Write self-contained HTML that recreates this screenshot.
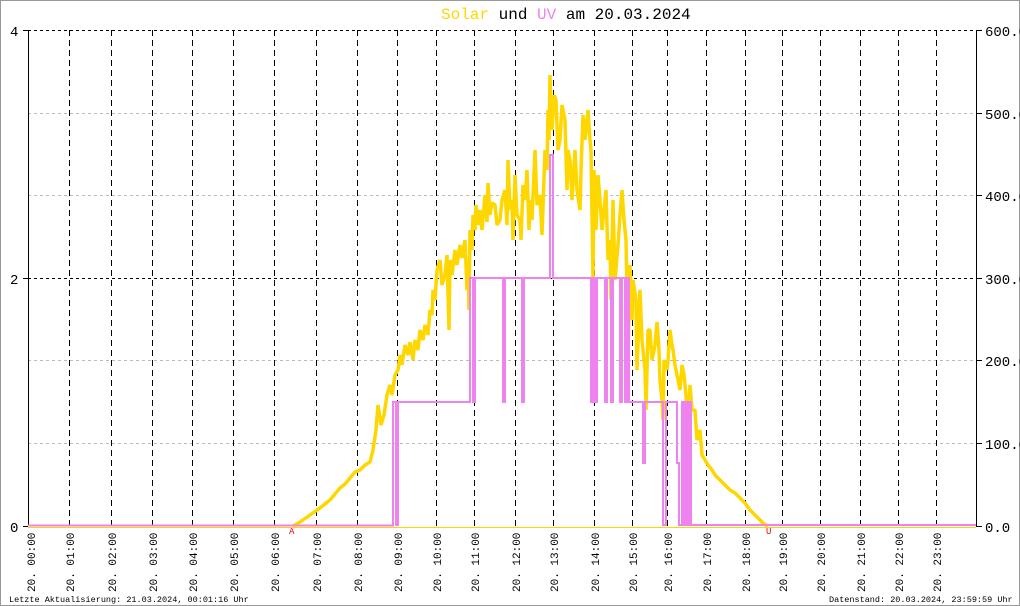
<!DOCTYPE html>
<html><head><meta charset="utf-8"><style>
html,body{margin:0;padding:0;background:#fff}
svg{display:block}
text{font-family:"Liberation Mono",monospace}
</style></head><body>
<svg width="1020" height="606" viewBox="0 0 1020 606" xmlns="http://www.w3.org/2000/svg">
<rect x="0.5" y="0.5" width="1019" height="605" fill="#fff" stroke="#999"/>
<text x="441" y="19" font-size="16"><tspan fill="#ffd700">Solar</tspan> und <tspan fill="#ee82ee">UV</tspan> am 20.03.2024</text>
<g stroke="#bbb" stroke-dasharray="3,3" stroke-width="1">
<line x1="28" y1="113.5" x2="976" y2="113.5"/><line x1="28" y1="195.5" x2="976" y2="195.5"/>
<line x1="28" y1="360.5" x2="976" y2="360.5"/><line x1="28" y1="443.5" x2="976" y2="443.5"/>
</g>
<g stroke="#000" stroke-dasharray="3,3" stroke-width="1">
<line x1="28" y1="30.5" x2="976" y2="30.5"/><line x1="28" y1="278.5" x2="976" y2="278.5"/>
</g>
<g stroke="#000" stroke-dasharray="6,4" stroke-width="1">
<line x1="69.5" y1="30" x2="69.5" y2="526"/><line x1="111.5" y1="30" x2="111.5" y2="526"/><line x1="152.5" y1="30" x2="152.5" y2="526"/><line x1="192.5" y1="30" x2="192.5" y2="526"/><line x1="233.5" y1="30" x2="233.5" y2="526"/><line x1="274.5" y1="30" x2="274.5" y2="526"/><line x1="316.5" y1="30" x2="316.5" y2="526"/><line x1="357.5" y1="30" x2="357.5" y2="526"/><line x1="397.5" y1="30" x2="397.5" y2="526"/><line x1="436.5" y1="30" x2="436.5" y2="526"/><line x1="474.5" y1="30" x2="474.5" y2="526"/><line x1="515.5" y1="30" x2="515.5" y2="526"/><line x1="553.5" y1="30" x2="553.5" y2="526"/><line x1="594.5" y1="30" x2="594.5" y2="526"/><line x1="632.5" y1="30" x2="632.5" y2="526"/><line x1="667.5" y1="30" x2="667.5" y2="526"/><line x1="706.5" y1="30" x2="706.5" y2="526"/><line x1="745.5" y1="30" x2="745.5" y2="526"/><line x1="782.5" y1="30" x2="782.5" y2="526"/><line x1="820.5" y1="30" x2="820.5" y2="526"/><line x1="860.5" y1="30" x2="860.5" y2="526"/><line x1="898.5" y1="30" x2="898.5" y2="526"/><line x1="936.5" y1="30" x2="936.5" y2="526"/>
</g>
<g stroke="#000" stroke-width="1">
<line x1="28.5" y1="30" x2="28.5" y2="526"/><line x1="976.5" y1="30" x2="976.5" y2="526"/>
<line x1="23" y1="30.5" x2="28" y2="30.5"/><line x1="23" y1="278.5" x2="28" y2="278.5"/><line x1="23" y1="526.5" x2="28" y2="526.5"/>
<line x1="976" y1="30.5" x2="982" y2="30.5"/><line x1="976" y1="113.5" x2="982" y2="113.5"/><line x1="976" y1="195.5" x2="982" y2="195.5"/><line x1="976" y1="278.5" x2="982" y2="278.5"/><line x1="976" y1="360.5" x2="982" y2="360.5"/><line x1="976" y1="443.5" x2="982" y2="443.5"/><line x1="976" y1="526.5" x2="982" y2="526.5"/>
</g>
<g font-size="14" fill="#000">
<text x="10" y="36">4</text><text x="10" y="284">2</text><text x="10" y="532">0</text>
</g>
<g font-size="14" fill="#000">
<text x="985" y="36">600.0</text><text x="985" y="119">500.0</text><text x="985" y="201">400.0</text><text x="985" y="284">300.0</text><text x="985" y="366">200.0</text><text x="985" y="449">100.0</text><text x="985" y="532">0.0</text>
</g>
<line x1="28" y1="527.5" x2="976" y2="527.5" stroke="#ffd700" stroke-width="1"/>
<polyline fill="none" stroke="#ffd700" stroke-width="3.5" stroke-linejoin="bevel" points="293,526 300,522 310,515 320,508 330,500 340,488 345,484 350,478 355,472 360,470 365,465 370,462 373,450 376,430 378,405 381,425 384,415 387,395 390,385 392,395 395,375 398,370 400,355 402,365 405,345 408,355 410,342 413,360 415,340 418,350 420,330 423,340 425,325 428,335 430,310 432,315 433,290 435,300 437,270 440,260 442,285 445,275 447,255 449,330 450,260 452,275 455,250 457,265 460,245 462,258 465,240 467,290 468,260 469,310 470,230 472,250 473,215 475,230 476,205 478,225 480,210 482,230 485,195 487,222 488,183 490,215 492,203 495,205 497,225 500,220 502,200 505,190 507,225 508,160 510,210 512,200 513,240 515,175 517,215 520,220 521,240 523,185 525,200 527,170 529,230 530,200 532,220 535,150 537,205 540,195 542,235 545,150 547,170 548,110 549,140 550,75 551,110 552,130 554,95 556,100 558,150 560,140 562,105 565,120 567,190 568,150 570,160 572,200 575,150 577,190 580,210 581,170 583,115 585,140 588,110 590,140 591,150 593,280 594,170 595,195 596,230 598,175 600,200 602,230 604,210 606,190 608,260 610,240 611,300 613,200 615,280 618,245 620,215 622,190 624,220 626,240 627,290 628,360 630,265 632,320 633,280 636,300 637,370 640,290 642,340 645,370 646,410 648,330 650,330 652,360 655,345 657,322 659,350 660,380 662,400 663,420 664,360 667,370 668,360 670,330 672,345 673,350 675,365 678,380 680,390 682,365 684,375 686,395 688,420 690,385 692,410 695,410 697,440 700,430 702,455 705,460 708,465 712,470 715,475 720,480 725,485 730,490 735,493 740,498 745,503 750,510 755,515 760,520 764,524 768,526"/>
<path fill="none" stroke="#ee82ee" stroke-width="2" d="M28,525.5 H393 V402 H396 V525 H398 V402 H470 V278 H473 V402 H475 V278 H503 V402 H505 V278 H522 V402 H524 V278 H550 V155 H553 V278 H591 V402 H593 V278 H595 V402 H597 V278 H605 V402 H607 V278 H611 V402 H613 V278 H620 V402 H622 V278 H625 V402 H627 V278 H629 V402 H643 V463 H645 V402 H663 V525 H666 V402 H677 V463 H679 V525 H682 V402 H683 V525 H685 V402 H687 V525 H689 V402 H691 V525 H976"/>
<text x="289" y="534" font-size="9" fill="#e00">A</text>
<text x="766" y="534" font-size="9" fill="#e00">U</text>
<g font-size="11" fill="#000">
<text transform="translate(35,592) rotate(-90)">20. 00:00</text>
<text transform="translate(74,592) rotate(-90)">20. 01:00</text>
<text transform="translate(116,592) rotate(-90)">20. 02:00</text>
<text transform="translate(157,592) rotate(-90)">20. 03:00</text>
<text transform="translate(197,592) rotate(-90)">20. 04:00</text>
<text transform="translate(238,592) rotate(-90)">20. 05:00</text>
<text transform="translate(279,592) rotate(-90)">20. 06:00</text>
<text transform="translate(321,592) rotate(-90)">20. 07:00</text>
<text transform="translate(362,592) rotate(-90)">20. 08:00</text>
<text transform="translate(402,592) rotate(-90)">20. 09:00</text>
<text transform="translate(441,592) rotate(-90)">20. 10:00</text>
<text transform="translate(479,592) rotate(-90)">20. 11:00</text>
<text transform="translate(520,592) rotate(-90)">20. 12:00</text>
<text transform="translate(558,592) rotate(-90)">20. 13:00</text>
<text transform="translate(599,592) rotate(-90)">20. 14:00</text>
<text transform="translate(637,592) rotate(-90)">20. 15:00</text>
<text transform="translate(672,592) rotate(-90)">20. 16:00</text>
<text transform="translate(711,592) rotate(-90)">20. 17:00</text>
<text transform="translate(750,592) rotate(-90)">20. 18:00</text>
<text transform="translate(787,592) rotate(-90)">20. 19:00</text>
<text transform="translate(825,592) rotate(-90)">20. 20:00</text>
<text transform="translate(865,592) rotate(-90)">20. 21:00</text>
<text transform="translate(903,592) rotate(-90)">20. 22:00</text>
<text transform="translate(941,592) rotate(-90)">20. 23:00</text>
</g>
<text x="9" y="602" font-size="8.5" fill="#000">Letzte Aktualisierung: 21.03.2024, 00:01:16 Uhr</text>
<text x="829" y="602" font-size="8.5" fill="#000">Datenstand: 20.03.2024, 23:59:59 Uhr</text>
</svg>
</body></html>
